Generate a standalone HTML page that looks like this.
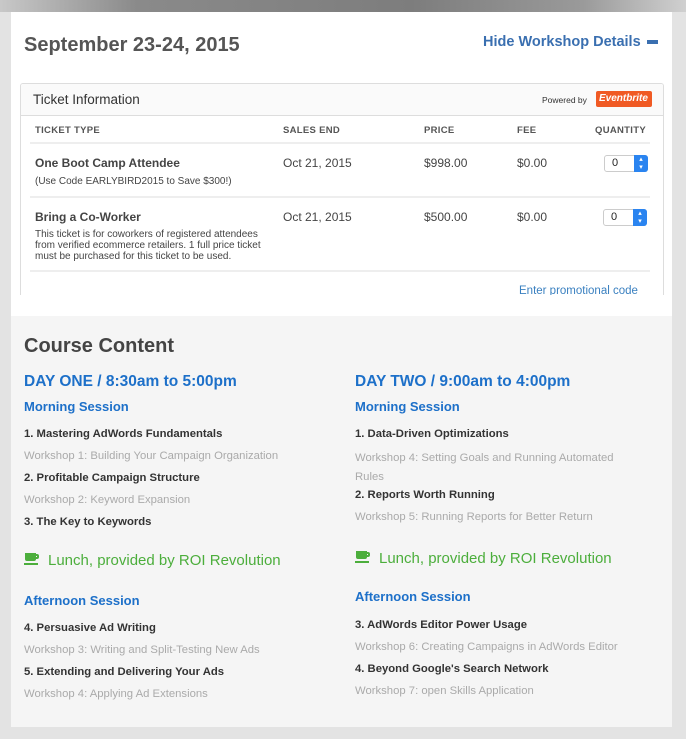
<!DOCTYPE html>
<html><head><meta charset="utf-8"><style>
*{margin:0;padding:0;box-sizing:border-box}
body{width:686px;height:739px;overflow:hidden;background:#e3e3e3;font-family:"Liberation Sans",sans-serif;position:relative}
.a{position:absolute;white-space:nowrap}
.top{position:absolute;left:0;top:0;width:686px;height:12px;background:linear-gradient(90deg,#c8c8c8,#8a8a8a 20%,#7d7d7d 60%,#9a9a9a 85%,#d0d0d0)}
.white{position:absolute;left:11px;top:12px;width:661px;height:304px;background:#fff}
.gray{position:absolute;left:11px;top:316px;width:661px;height:411px;background:#f5f5f5}
.box{position:absolute;left:20px;top:83px;width:644px;height:212px;border:1px solid #ddd;border-bottom:none;border-radius:3px 3px 0 0;overflow:hidden}
.hd{position:absolute;left:0;top:0;width:100%;height:32px;background:#fafafa;border-bottom:1px solid #ddd}
.th{font-size:9.5px;font-weight:bold;color:#555;letter-spacing:.3px}
.t{font-size:12px;color:#444}
.s{font-size:10px;color:#444;line-height:11px}
.ln{position:absolute;left:30px;width:620px;height:2px;background:#eee}
.qty{position:absolute;width:44px;height:17px;border:1px solid #ccc;border-radius:3px;background:#fff;font-size:11px;padding-left:7px;line-height:15px;color:#222}
.qty i{position:absolute;right:-1px;top:-1px;width:14px;height:17px;background:#2a84f0;border-radius:0 3px 3px 0;color:#fff;font-size:7px;font-style:normal;text-align:center;line-height:8px;padding-top:1px}
.dh{font-size:15.5px;font-weight:bold;color:#1d70c9}
.sh{font-size:13px;font-weight:bold;color:#1d70c9}
.it{font-size:11.3px;font-weight:bold;color:#333}
.ws{font-size:11.3px;color:#aaa}
.lu{font-size:15px;color:#4cae3c}
.cup{display:inline-block;width:15px;height:13px;position:relative;vertical-align:-1px;margin-right:9px}
.cup b{position:absolute;left:1px;top:0;width:11px;height:8px;background:#4cae3c;border-radius:0 0 2px 2px}
.cup u{position:absolute;left:10px;top:1px;width:5px;height:5px;border:2px solid #4cae3c;border-radius:2px}
.cup s{position:absolute;left:0;top:10px;width:14px;height:2px;background:#4cae3c}
</style></head><body>
<div class="top"></div>
<div class="white"></div>
<div class="gray"></div>
<div class="a" style="left:24px;top:34px;font-size:20px;font-weight:bold;color:#555">September 23-24, 2015</div>
<div class="a" style="left:483px;top:34px;font-size:14.5px;font-weight:bold;color:#3a6fb0">Hide Workshop Details</div>
<div class="a" style="left:647px;top:40px;width:11px;height:4px;background:#3a6fb0"></div>
<div class="box"><div class="hd"></div>
<div class="a" style="left:12px;top:8px;font-size:13.5px;color:#333">Ticket Information</div>
<div class="a" style="left:521px;top:11px;font-size:8.5px;color:#333">Powered by</div>
<div class="a" style="left:575px;top:7px;width:56px;height:16px;background:#f05a24;border-radius:2px;color:#fff;font-size:10px;font-style:italic;font-weight:bold;padding-left:3px;line-height:16px">Eventbrite</div>
</div>
<div class="a th" style="left:35px;top:125px">TICKET TYPE</div>
<div class="a th" style="left:283px;top:125px">SALES END</div>
<div class="a th" style="left:424px;top:125px">PRICE</div>
<div class="a th" style="left:517px;top:125px">FEE</div>
<div class="a th" style="left:595px;top:125px">QUANTITY</div>
<div class="ln" style="top:142px"></div>
<div class="a t" style="left:35px;top:156px;font-weight:bold">One Boot Camp Attendee</div>
<div class="a s" style="left:35px;top:176px">(Use Code EARLYBIRD2015 to Save $300!)</div>
<div class="a t" style="left:283px;top:156px">Oct 21, 2015</div>
<div class="a t" style="left:424px;top:156px">$998.00</div>
<div class="a t" style="left:517px;top:156px">$0.00</div>
<div class="qty" style="left:604px;top:155px">0<i>▴<br>▾</i></div>
<div class="ln" style="top:196px"></div>
<div class="a t" style="left:35px;top:210px;font-weight:bold">Bring a Co-Worker</div>
<div class="a s" style="left:35px;top:229px">This ticket is for coworkers of registered attendees<br>from verified ecommerce retailers. 1 full price ticket<br>must be purchased for this ticket to be used.</div>
<div class="a t" style="left:283px;top:210px">Oct 21, 2015</div>
<div class="a t" style="left:424px;top:210px">$500.00</div>
<div class="a t" style="left:517px;top:210px">$0.00</div>
<div class="qty" style="left:603px;top:209px">0<i>▴<br>▾</i></div>
<div class="ln" style="top:270px"></div>
<div class="a" style="left:519px;top:285px;font-size:11.5px;color:#3a80c0;height:10px;overflow:hidden">Enter promotional code</div>

<div class="a" style="left:24px;top:335px;font-size:20px;font-weight:bold;color:#444">Course Content</div>
<div class="a dh" style="left:24px;top:373px">DAY ONE / 8:30am to 5:00pm</div>
<div class="a sh" style="left:24px;top:399px">Morning Session</div>
<div class="a it" style="left:24px;top:428px">1. Mastering AdWords Fundamentals</div>
<div class="a ws" style="left:24px;top:450px">Workshop 1: Building Your Campaign Organization</div>
<div class="a it" style="left:24px;top:472px">2. Profitable Campaign Structure</div>
<div class="a ws" style="left:24px;top:494px">Workshop 2: Keyword Expansion</div>
<div class="a it" style="left:24px;top:516px">3. The Key to Keywords</div>
<div class="a lu" style="left:24px;top:552px"><span class="cup"><b></b><u></u><s></s></span>Lunch, provided by ROI Revolution</div>
<div class="a sh" style="left:24px;top:593px">Afternoon Session</div>
<div class="a it" style="left:24px;top:622px">4. Persuasive Ad Writing</div>
<div class="a ws" style="left:24px;top:644px">Workshop 3: Writing and Split-Testing New Ads</div>
<div class="a it" style="left:24px;top:666px">5. Extending and Delivering Your Ads</div>
<div class="a ws" style="left:24px;top:688px">Workshop 4: Applying Ad Extensions</div>

<div class="a dh" style="left:355px;top:373px">DAY TWO / 9:00am to 4:00pm</div>
<div class="a sh" style="left:355px;top:399px">Morning Session</div>
<div class="a it" style="left:355px;top:428px">1. Data-Driven Optimizations</div>
<div class="a ws" style="left:355px;top:449px;line-height:19px">Workshop 4: Setting Goals and Running Automated<br>Rules</div>
<div class="a it" style="left:355px;top:489px">2. Reports Worth Running</div>
<div class="a ws" style="left:355px;top:511px">Workshop 5: Running Reports for Better Return</div>
<div class="a lu" style="left:355px;top:550px"><span class="cup"><b></b><u></u><s></s></span>Lunch, provided by ROI Revolution</div>
<div class="a sh" style="left:355px;top:589px">Afternoon Session</div>
<div class="a it" style="left:355px;top:619px">3. AdWords Editor Power Usage</div>
<div class="a ws" style="left:355px;top:641px">Workshop 6: Creating Campaigns in AdWords Editor</div>
<div class="a it" style="left:355px;top:663px">4. Beyond Google's Search Network</div>
<div class="a ws" style="left:355px;top:685px">Workshop 7: open Skills Application</div>
</body></html>
